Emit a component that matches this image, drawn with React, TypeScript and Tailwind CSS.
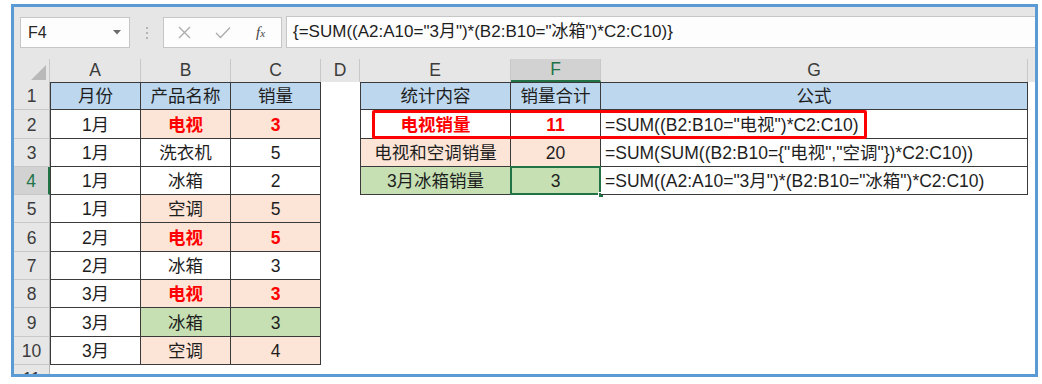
import React from 'react';

type Cell = { t: string; bg?: 'blue' | 'peach' | 'green'; red?: boolean; left?: boolean; sel?: boolean };

const bgClass: Record<string, string> = {
    blue: 'bg-[#bdd7ee]',
    peach: 'bg-[#fce4d6]',
    green: 'bg-[#c6e0b4]',
};

const leftTable: Cell[][] = [
    [{ t: '月份', bg: 'blue' }, { t: '产品名称', bg: 'blue' }, { t: '销量', bg: 'blue' }],
    [{ t: '1月' }, { t: '电视', bg: 'peach', red: true }, { t: '3', bg: 'peach', red: true }],
    [{ t: '1月' }, { t: '洗衣机' }, { t: '5' }],
    [{ t: '1月' }, { t: '冰箱' }, { t: '2' }],
    [{ t: '1月' }, { t: '空调', bg: 'peach' }, { t: '5', bg: 'peach' }],
    [{ t: '2月' }, { t: '电视', bg: 'peach', red: true }, { t: '5', bg: 'peach', red: true }],
    [{ t: '2月' }, { t: '冰箱' }, { t: '3' }],
    [{ t: '3月' }, { t: '电视', bg: 'peach', red: true }, { t: '3', bg: 'peach', red: true }],
    [{ t: '3月' }, { t: '冰箱', bg: 'green' }, { t: '3', bg: 'green' }],
    [{ t: '3月' }, { t: '空调', bg: 'peach' }, { t: '4', bg: 'peach' }],
];

const rightTable: Cell[][] = [
    [{ t: '统计内容', bg: 'blue' }, { t: '销量合计', bg: 'blue' }, { t: '公式', bg: 'blue' }],
    [{ t: '电视销量', red: true }, { t: '11', red: true }, { t: '=SUM((B2:B10="电视")*C2:C10)', left: true }],
    [{ t: '电视和空调销量', bg: 'peach' }, { t: '20', bg: 'peach' }, { t: '=SUM(SUM((B2:B10={"电视","空调"})*C2:C10))', left: true }],
    [{ t: '3月冰箱销量', bg: 'green' }, { t: '3', bg: 'green', sel: true }, { t: '=SUM((A2:A10="3月")*(B2:B10="冰箱")*C2:C10)', left: true }],
];

const colLetters = ['A', 'B', 'C', 'D', 'E', 'F', 'G'];

const TableCell: React.FC<{ cell: Cell; first: boolean; top: boolean }> = ({ cell, first, top }) => (
    <div
        className={`relative flex items-end pb-[3px] leading-[20px] border-r border-b border-[#3a3a3a] ${first ? 'border-l' : ''} ${top ? 'border-t' : ''} ${cell.bg ? bgClass[cell.bg] : 'bg-white'} ${cell.left ? 'justify-start pl-[4px]' : 'justify-center'} ${cell.red ? 'text-[#ff0000] font-bold' : 'text-[#1e1e1e]'}`}
    >
        <span className="whitespace-nowrap">{cell.t}</span>
        {cell.sel && (
            <>
                <div className="absolute -inset-px border-2 border-[#217346]" />
                <div className="absolute -right-[4px] -bottom-[4px] w-[6px] h-[6px] bg-[#217346] border border-white" />
            </>
        )}
    </div>
);

const App: React.FC = () => {
    const rows = Array.from({ length: 11 }, (_, i) => i + 1);

    return (
        <div className="w-[1042px] h-[384px] bg-white font-['Liberation_Sans','Noto_Sans_CJK_SC',sans-serif]">
            <div className="ml-[11px] mt-[4px] w-[1027px] h-[373px] border-[3px] border-[#5b9bd5] bg-[#e6e6e6] flex flex-col overflow-hidden">
                {/* formula bar */}
                <div className="h-[52px] shrink-0 flex items-start pt-[10px]">
                    <div className="ml-[6px] w-[110px] h-[31px] bg-[#fdfdfd] border border-[#c6c6c6] flex items-center justify-between pl-[7px] pr-[8px]">
                        <span className="text-[16px] text-[#262626]">F4</span>
                        <svg width="8" height="5" viewBox="0 0 8 5"><path d="M0 0h8L4 4.5z" fill="#6b6b6b" /></svg>
                    </div>
                    <div className="w-[33px] h-[31px] flex flex-col items-center justify-center gap-[3px]">
                        <div className="w-[2px] h-[2px] bg-[#b4b4b4]" />
                        <div className="w-[2px] h-[2px] bg-[#b4b4b4]" />
                        <div className="w-[2px] h-[2px] bg-[#b4b4b4]" />
                    </div>
                    <div className="w-[119px] h-[31px] bg-[#fdfdfd] border border-[#c6c6c6] flex items-center pl-[14px]">
                        <svg width="13" height="13" viewBox="0 0 13 13" className="mr-[24px]">
                            <path d="M1 1l11 11M12 1L1 12" stroke="#ababab" strokeWidth="1.3" />
                        </svg>
                        <svg width="16" height="13" viewBox="0 0 16 13" className="mr-[25px]">
                            <path d="M1 7l4.5 4.5L15 1.5" stroke="#ababab" strokeWidth="1.3" fill="none" />
                        </svg>
                        <span className="font-['Liberation_Serif',serif] italic text-[15px] text-[#444] leading-none">
                            f<span className="text-[11px]">x</span>
                        </span>
                    </div>
                    <div className="ml-[4px] flex-1 h-[32px] -mt-[1px] bg-[#fdfdfd] border-y border-l border-[#c6c6c6] flex items-center pl-[6px] text-[17px] text-[#1e1e1e] whitespace-nowrap">
                        {'{=SUM((A2:A10="3月")*(B2:B10="冰箱")*C2:C10)}'}
                    </div>
                </div>

                {/* sheet */}
                <div className="relative grid grid-cols-[36px_91px_90px_90px_39px_151px_90px_427px_1fr] grid-rows-[23px_28px_29px_28px_28px_28px_29px_28px_28px_29px_28px_28px] text-[17.5px] bg-white">
                    {/* header row */}
                    <div className="bg-[#e6e6e6] border-r border-[#c8c8c8] flex items-end justify-end pr-[3px] pb-[2px]">
                        <svg width="15" height="15" viewBox="0 0 15 15"><path d="M15 0V15H0z" fill="#b9b9b9" /></svg>
                    </div>
                    {colLetters.map(l => (
                        <div
                            key={l}
                            className={`flex items-center justify-center leading-none border-r border-[#c8c8c8] ${l === 'F' ? 'bg-[#d2d2d2] text-[#217346] border-b-2 border-b-[#217346]' : 'bg-[#e6e6e6] text-[#3c3c3c]'}`}
                        >
                            {l}
                        </div>
                    ))}
                    <div className="bg-[#e6e6e6]" />

                    {rows.map(r => (
                        <React.Fragment key={r}>
                            <div
                                className={`flex justify-center border-b border-[#c8c8c8] ${r === 11 ? 'items-start pt-[4px]' : 'items-end pb-[3px]'} leading-[20px] ${r === 4 ? 'bg-[#d2d2d2] text-[#217346] border-r-2 border-r-[#217346]' : 'bg-[#e6e6e6] text-[#3c3c3c] border-r border-r-[#b4b4b4]'}`}
                            >
                                {r}
                            </div>
                            {[0, 1, 2].map(c =>
                                r <= 10 ? (
                                    <TableCell key={c} cell={leftTable[r - 1][c]} first={c === 0} top={r === 1} />
                                ) : (
                                    <div key={c} />
                                )
                            )}
                            <div />
                            {[0, 1, 2].map(c =>
                                r <= 4 ? (
                                    <TableCell key={c} cell={rightTable[r - 1][c]} first={c === 0} top={r === 1} />
                                ) : (
                                    <div key={c} />
                                )
                            )}
                            <div />
                        </React.Fragment>
                    ))}

                    {/* red highlight box */}
                    <div className="absolute left-[358px] top-[51px] w-[495px] h-[29px] border-[3px] border-[#ff0000] rounded-[2px]" />
                </div>
            </div>
        </div>
    );
};

export default App;
